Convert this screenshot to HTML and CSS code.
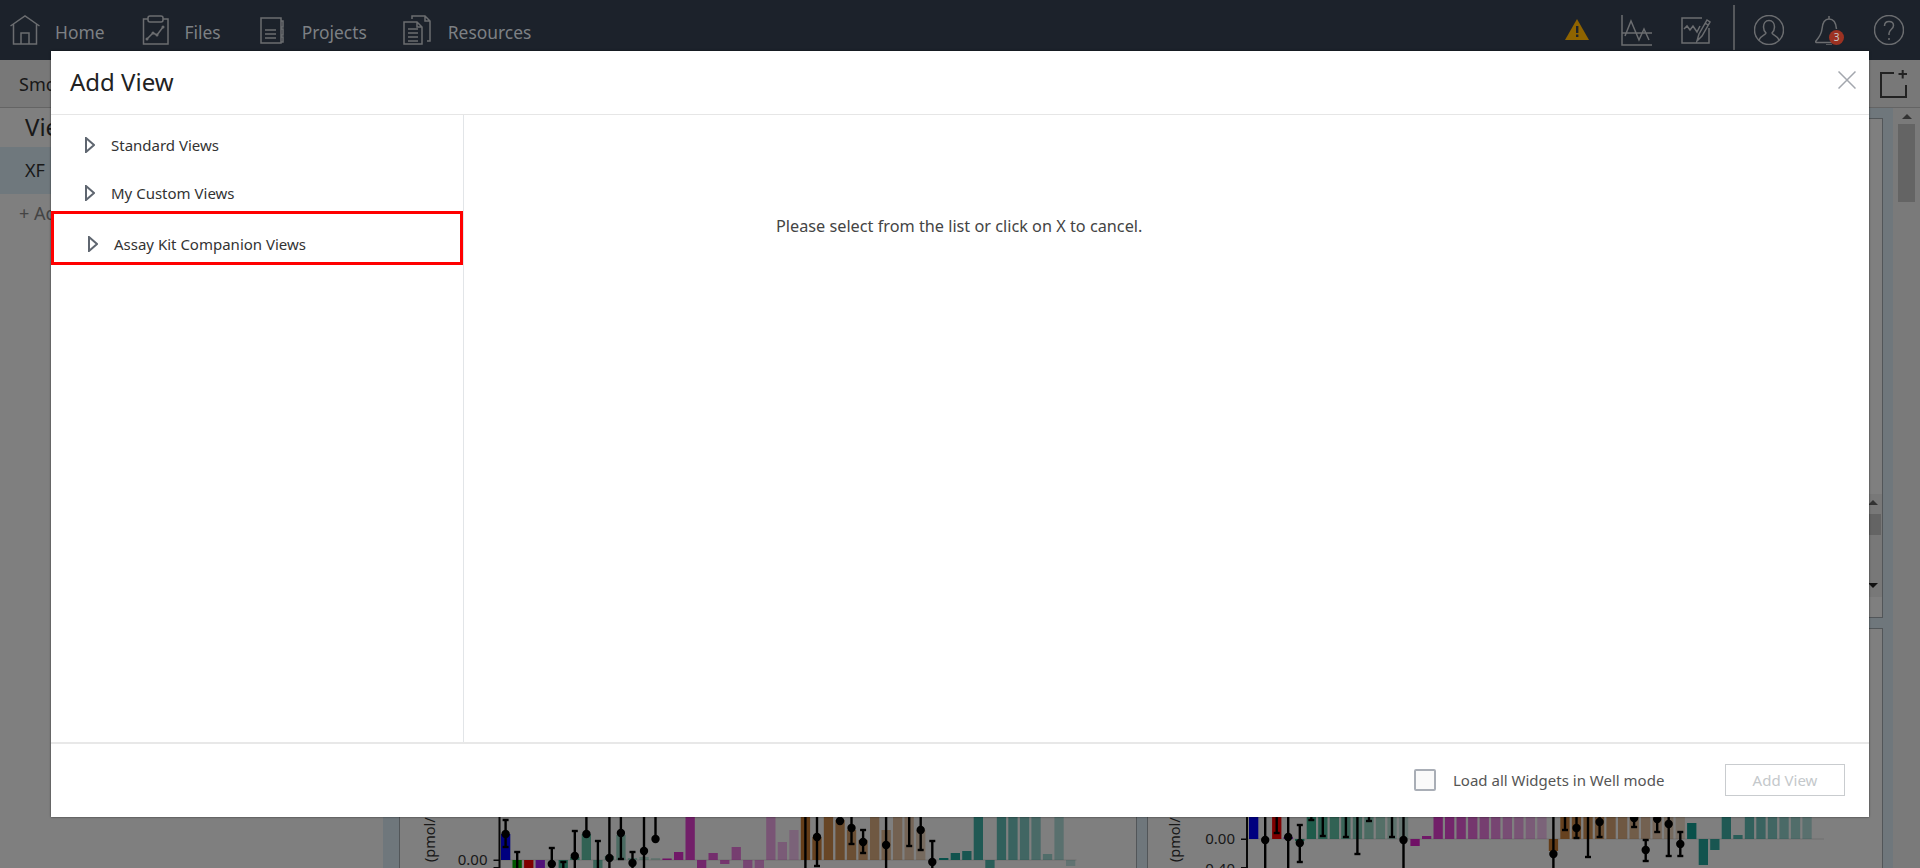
FILE: index.html
```html
<!DOCTYPE html>
<html>

<head>
    <meta name="viewport" content="width=device-width, initial-scale=1.0" />
    <title>Add View</title>
    <link rel="stylesheet" href="styles.css">
</head>

<body>
    <!-- Top nav -->
    <header class="topnav">
        <a class="nav-item nav-home">
            <svg class="nav-icon" width="30" height="30" viewBox="0 0 30 30">
                <path d="M.5 11 15 1l14.500 10M3.500 9v20h23V9M11 29V18h8v11" />
            </svg>
            <span>Home</span>
        </a>
        <a class="nav-item nav-files">
            <svg class="nav-icon" width="27" height="30" viewBox="0 0 27 30">
                <path d="M6 4H1.500v25H26V4h-5" />
                <rect x="6" y="1" width="15" height="6" rx="2" />
                <path d="m5 24 6-6 4 2 6-8" />
                <circle cx="5" cy="24" r="1.500" class="solid" />
                <circle cx="11" cy="18" r="1.500" class="solid" />
                <circle cx="15" cy="20" r="1.500" class="solid" />
                <circle cx="21" cy="12" r="1.500" class="solid" />
            </svg>
            <span>Files</span>
        </a>
        <a class="nav-item nav-projects">
            <svg class="nav-icon" width="24" height="27" viewBox="0 0 24 27">
                <path d="M21 1H1v25h20zM5 13h11M5 17h11M5 21h11M21 4h2v6h-2M21 12h2v6h-2M21 20h2v5h-2" />
            </svg>
            <span>Projects</span>
        </a>
        <a class="nav-item nav-resources">
            <svg class="nav-icon" width="28" height="30" viewBox="0 0 28 30">
                <path d="M1 7h13l5 5v17H1zM14 7v5h5M5 14h10M5 18h10M5 22h10M5 26h10M9 4V1h13l5 5v20h-3M22 1v5h5" />
            </svg>
            <span>Resources</span>
        </a>

        <div class="nav-tools">
            <svg class="warn-icon" width="24" height="21" viewBox="0 0 24 21">
                <path d="M12 0 24 21H0z" fill="#8f6400" />
                <path d="M11 7h2.400v7H11zM11 15.500h2.400V18H11z" fill="#1c222b" />
            </svg>
            <svg class="nav-icon tool-chart" width="31" height="31" viewBox="0 0 31 31">
                <path d="M1 0v30h30M1 18h30M4 21 10 6l8 19 5-11 5 11" />
            </svg>
            <svg class="nav-icon tool-edit" width="31" height="27" viewBox="0 0 31 27">
                <path d="M21 1H1v25h27V11M3 12l3-3 3 4 3-4 4 6 3-6M16 24l2-7L26 3l3 2-8 14zM24 6l3 2" />
            </svg>
            <div class="nav-divider"></div>
            <svg class="nav-icon tool-user" width="30" height="30" viewBox="0 0 30 30">
                <circle cx="15" cy="15" r="14.500" />
                <path d="M15 5.500c-3.500 0-5.500 3-5.500 6.500 0 3 1.500 5 2.500 6 0 2-5.500 2.500-7 7M15 5.500c3.500 0 5.500 3 5.500 6.500 0 3-1.500 5-2.500 6 0 2 5.500 2.500 7 7" />
            </svg>
            <div class="bell-holder">
                <svg class="nav-icon" width="30" height="30" viewBox="0 0 30 30">
                    <path d="M14 1v3M14 4C9 4 7.500 8 7 14 6.500 19 3.500 23 1 26c-.8 1 0 1.500 1 1.500h20M11 30h6M14 4c5 0 7 4 7.500 10" />
                </svg>
                <span class="bell-badge">3</span>
            </div>
            <svg class="nav-icon tool-help" width="30" height="30" viewBox="0 0 30 30">
                <circle cx="15" cy="15" r="14.500" />
                <path d="M10.500 11c0-3 2-4.500 4.500-4.500s4.500 1.500 4.500 4c0 3.500-4.500 4-4.500 8v1.500M15 23v2" />
            </svg>
        </div>
    </header>

    <!-- Page behind the dialog -->
    <div class="subbar">
        <span>Smc</span>
        <svg class="add-widget" width="27" height="28" viewBox="0 0 27 28">
            <path d="M14 3H1v24h25V15M18.500 4H27M22.700 0v8.500" />
        </svg>
    </div>

    <div class="workspace">
        <aside class="views-side">
            <div class="views-title">View</div>
            <div class="views-row">XF</div>
            <div class="views-add">+ Add</div>
        </aside>

        <div class="charts">
            <div class="panel panel-top">
                <div class="inner-scroll">
                    <div class="arrow-up"></div>
                    <div class="inner-thumb"></div>
                    <div class="arrow-down"></div>
                </div>
            </div>
            <div class="chart-row">
                <div class="panel"><svg id="chart1" class="chart" width="736" height="240" viewBox="400 629 736 240"></svg></div>
                <div class="panel"><svg id="chart2" class="chart" width="734" height="240" viewBox="1148 629 734 240"></svg></div>
            </div>
        </div>

        <div class="page-scroll">
            <div class="arrow-up"></div>
            <div class="page-thumb"></div>
        </div>
    </div>

    <div class="scrim"></div>

    <!-- Add View dialog -->
    <div class="modal">
        <div class="modal-head">
            <h1>Add View</h1>
            <svg class="modal-close" width="18" height="18" viewBox="0 0 18 18">
                <path d="M.5.5l17 17M17.500.5l-17 17" />
            </svg>
        </div>
        <div class="modal-body">
            <div class="tree">
                <div class="tree-row">
                    <svg class="tree-arrow" width="10" height="16" viewBox="0 0 10 16"><path d="M1 1v14l8-7z" /></svg>
                    <span>Standard Views</span>
                </div>
                <div class="tree-row">
                    <svg class="tree-arrow" width="10" height="16" viewBox="0 0 10 16"><path d="M1 1v14l8-7z" /></svg>
                    <span>My Custom Views</span>
                </div>
                <div class="tree-row picked">
                    <svg class="tree-arrow" width="10" height="16" viewBox="0 0 10 16"><path d="M1 1v14l8-7z" /></svg>
                    <span>Assay Kit Companion Views</span>
                </div>
            </div>
            <div class="modal-main">Please select from the list or click on X to cancel.</div>
        </div>
        <div class="modal-foot">
            <div class="check-box"></div>
            <span class="check-label">Load all Widgets in Well mode</span>
            <button class="add-btn" disabled>Add View</button>
        </div>
    </div>

    <script src="script.js"></script>
</body>

</html>
```

FILE: styles.css
```css
* {
    box-sizing: border-box;
}

html,
body {
    margin: 0;
    height: 868px;
    overflow: hidden;
}

body {
    position: relative;
    font-family: "Noto Sans", sans-serif;
    background: #fff;
    color: #333;
}

/* top nav */
.topnav {
    position: relative;
    z-index: 2;
    display: flex;
    align-items: flex-start;
    height: 60px;
    padding-left: 10px;
    background: #1c222b;
    color: #7d8084;
    font-size: 17.4px;
}

.nav-item {
    display: flex;
    align-items: center;
    gap: 15px;
    height: 60px;
    margin-right: 38px;
}

.nav-item span {
    margin-top: 3px;
}

.nav-files {
    margin-right: 39px;
}

.nav-projects {
    gap: 18px;
    margin-right: 36px;
}

.nav-resources {
    gap: 17px;
}

.nav-icon {
    display: block;
    fill: none;
    stroke: #6b6d70;
    stroke-width: 1.5;
}

.nav-icon .solid {
    fill: #6b6d70;
    stroke: none;
}

.nav-tools {
    display: flex;
    align-items: center;
    height: 60px;
    margin-left: auto;
    padding-right: 16px;
}

.warn-icon {
    margin-right: 32px;
    margin-top: -2px;
}

.tool-edit {
    margin-left: 29px;
}

.nav-divider {
    width: 2px;
    height: 45px;
    margin: -6px 19px 0 21px;
    background: #55585c;
}

.bell-holder {
    position: relative;
    margin: 0 29px 0 31px;
}

.bell-badge {
    position: absolute;
    right: 1px;
    bottom: 0;
    width: 15px;
    height: 15px;
    border-radius: 50%;
    background: #9c3222;
    color: #c9c9c9;
    font-size: 10px;
    line-height: 15px;
    text-align: center;
}

/* page behind the dialog */
.subbar {
    display: flex;
    align-items: center;
    justify-content: space-between;
    height: 48px;
    padding: 0 13px 0 19px;
    background: #f0f0f0;
    border-bottom: 1px solid #c8c8c8;
    font-size: 18px;
}

.add-widget {
    fill: none;
    stroke: #444;
    stroke-width: 2;
}

.workspace {
    display: flex;
    height: 760px;
}

.views-side {
    width: 383px;
}

.views-title {
    height: 39px;
    padding-left: 25px;
    font-size: 24px;
    line-height: 38px;
}

.views-row {
    height: 47px;
    padding-left: 25px;
    background: #dff0fa;
    font-size: 18px;
    line-height: 47px;
}

.views-add {
    padding: 7px 0 0 19px;
    color: #888;
    font-size: 18px;
}

.charts {
    flex: 1;
    display: flex;
    flex-direction: column;
    gap: 10px;
    padding: 10px 10px 0 16px;
    background: #dfeef8;
}

.panel {
    border: 1px solid #a4adb3;
    background: #fff;
}

.panel-top {
    display: flex;
    justify-content: flex-end;
    height: 500px;
    flex-shrink: 0;
}

.inner-scroll {
    display: flex;
    flex-direction: column;
    align-items: center;
    width: 19px;
    height: 103px;
    margin-top: 375px;
    background: #f0f0f0;
}

.inner-thumb {
    width: 16px;
    height: 21px;
    margin-top: 9px;
    background: #c8c8c8;
}

.arrow-up {
    width: 0;
    margin-top: 6px;
    border: 5px solid transparent;
    border-top: 0;
    border-bottom: 5px solid #666;
}

.arrow-down {
    width: 0;
    margin-top: auto;
    margin-bottom: 9px;
    border: 5px solid transparent;
    border-bottom: 0;
    border-top: 5px solid #222;
}

.chart-row {
    display: flex;
    gap: 10px;
}

.chart-row .panel:first-child {
    width: 738px;
}

.chart-row .panel:last-child {
    flex: 1;
}

.chart {
    display: block;
    font-size: 15px;
    fill: #333;
}

.page-scroll {
    display: flex;
    flex-direction: column;
    align-items: center;
    width: 27px;
    background: #f4f4f4;
}

.page-thumb {
    width: 17px;
    height: 78px;
    margin-top: 5px;
    background: #c8c8c8;
}

.scrim {
    position: absolute;
    top: 60px;
    left: 0;
    right: 0;
    bottom: 0;
    background: rgba(0, 0, 0, 0.5);
}

/* dialog */
.modal {
    position: absolute;
    z-index: 3;
    top: 51px;
    left: 51px;
    display: flex;
    flex-direction: column;
    width: 1818px;
    height: 766px;
    background: #fff;
    box-shadow: 0 0 2px rgba(0, 0, 0, 0.6);
    color: #333;
}

.modal-head {
    display: flex;
    align-items: center;
    justify-content: space-between;
    height: 64px;
    padding: 0 13px 2px 19px;
    border-bottom: 1px solid #e6e6e6;
}

.modal-head h1 {
    margin: 0;
    color: #222;
    font-size: 24px;
    font-weight: 400;
}

.modal-close {
    margin-bottom: 3px;
    fill: none;
    stroke: #a3a7ae;
    stroke-width: 1.5;
}

.modal-body {
    flex: 1;
    display: flex;
}

.tree {
    width: 413px;
    padding-top: 14px;
    border-right: 1px solid #e2e5e8;
}

.tree-row {
    display: flex;
    align-items: center;
    gap: 16px;
    height: 32px;
    margin-bottom: 16px;
    padding-left: 34px;
    font-size: 15px;
}

.tree-row.picked {
    height: 54px;
    margin-top: -14px;
    padding: 12px 0 0 34px;
    border: 3px solid #f00;
}

.tree-arrow {
    fill: none;
    stroke: #5f6670;
    stroke-width: 2;
}

.modal-main {
    flex: 1;
    padding: 101px 0 0 312px;
    color: #444;
    font-size: 16.25px;
    line-height: 20px;
}

.modal-foot {
    display: flex;
    align-items: center;
    justify-content: flex-end;
    height: 75px;
    padding: 0 24px 2px 0;
    border-top: 2px solid #e8e8e8;
}

.check-box {
    width: 22px;
    height: 22px;
    border: 2px solid #a9aeb6;
    border-radius: 2px;
    background: #fafafa;
}

.check-label {
    width: 211px;
    margin: 0 61px 0 17px;
    color: #555;
    font-size: 15px;
    white-space: nowrap;
}

.add-btn {
    width: 120px;
    height: 32px;
    border: 1px solid #c9cccf;
    background: #fff;
    color: #c4c8cb;
    font-family: inherit;
    font-size: 15px;
}
```

FILE: script.js
```js
// bars and error bars for the two charts behind the dialog
// coordinates are page pixels, the svg viewBox takes care of the offset
var TALL = 60;
var BELOW = -12;
var PITCH = 11.53;
var BAR_W = 9.3;

var fixedColors = { 0: "#0000ff", 1: "#00b000", 2: "#ff0000", 3: "#a020f0" };

var groups = [
    { from: 4, to: 13, color: "#2fb08c" },
    { from: 14, to: 25, color: "#e020cc" },
    { from: 26, to: 37, color: "#c87a30" },
    { from: 38, to: 49, color: "#12a094" }
];

var bars1 = [26, BELOW, BELOW, BELOW, 0, BELOW, 3, 26, BELOW, 4, 25, 2, 3, 2,
    1.5, 8, TALL, BELOW, 7, -4, 13, BELOW, BELOW, TALL, 18, 30,
    TALL, 23, TALL, 40, 30, 20, TALL, 30, TALL, TALL, 30, 0,
    2, 7, 9, TALL, BELOW, TALL, TALL, TALL, TALL, 6, TALL, -6];

var bars2 = [40, 0, 40, 2, -2, TALL, TALL, TALL, TALL, TALL, TALL, TALL, TALL, TALL,
    -7, 3, TALL, TALL, TALL, TALL, TALL, TALL, TALL, TALL, TALL, TALL,
    -12, TALL, TALL, TALL, TALL, TALL, TALL, TALL, TALL, TALL, TALL, TALL,
    16, -26, -11, TALL, 4, TALL, TALL, TALL, TALL, TALL, TALL, 0];

// [index, top, dot, bottom], a top of 800 or bottom of 880 runs off the crop so has no cap
var errs1 = [[0, 820, 834, 847], [1, 852, null, 880], [4, 848, 864, 880], [5, 862, null, 880],
    [6, 831, 856, 880], [7, 800, 834, 834], [8, 841, null, 880], [9, 800, 858, 880],
    [10, 800, 833, 859], [11, 852, 863, 880], [12, 800, 851, 880], [13, 800, 839, 839],
    [26, 800, null, 880], [27, 800, 837, 866], [29, 800, 821, 821], [30, 800, 828, 844],
    [31, 830, 842, 853], [33, 800, 845, 880], [35, 800, null, 846], [36, 800, 830, 850],
    [37, 841, 862, 880]];

var errs2 = [[1, 800, 840, 880], [2, 800, null, 833], [3, 800, 837, 880], [4, 825, 843, 862],
    [5, 800, null, 820], [6, 800, null, 836], [8, 800, null, 837], [9, 800, null, 854],
    [10, 800, null, 821], [12, 800, null, 837], [13, 800, 840, 880],
    [26, 800, 854, 880], [27, 800, null, 830], [28, 800, 828, 838], [29, 800, null, 857],
    [30, 800, 822, 837], [33, 800, 818, 827], [34, 840, 850, 861], [35, 800, 819, 832],
    [36, 800, 824, 856], [37, 832, 844, 856]];

function barFill(i) {
    if (fixedColors[i]) {
        return { color: fixedColors[i], alpha: 1 };
    }
    for (var g = 0; g < groups.length; g++) {
        if (i >= groups[g].from && i <= groups[g].to) {
            var step = (i - groups[g].from) / (groups[g].to - groups[g].from);
            return { color: groups[g].color, alpha: 1 - 0.75 * step };
        }
    }
}

function drawChart(id, c) {
    var out = "";

    // baseline, axis and ticks
    out += '<rect x="' + c.axisX + '" y="' + (c.base - 0.5) + '" width="' + c.baseW + '" height="1" fill="#ddd"/>';
    out += '<rect x="' + (c.axisX - 1) + '" y="800" width="2" height="80" fill="#111"/>';
    out += '<rect x="' + (c.axisX - 6) + '" y="' + (c.base - 0.5) + '" width="6" height="1.5" fill="#111"/>';
    out += '<rect x="' + (c.axisX - 6) + '" y="867" width="6" height="1.5" fill="#111"/>';
    out += '<text x="' + (c.axisX - 12) + '" y="' + (c.base + 5) + '" text-anchor="end">0.00</text>';
    if (c.second) {
        out += '<text x="' + (c.axisX - 12) + '" y="874" text-anchor="end">-0.40</text>';
    }
    out += '<text transform="translate(' + c.labelX + ',862) rotate(-90)" font-size="14.500">(pmol/</text>';

    c.bars.forEach(function (h, i) {
        if (!h) {
            return;
        }
        var fill = barFill(i);
        var x = c.barX + PITCH * i;
        var y = h > 0 ? c.base - h : c.base;
        out += '<rect x="' + x.toFixed(1) + '" y="' + y + '" width="' + BAR_W + '" height="' + Math.abs(h) +
            '" fill="' + fill.color + '" fill-opacity="' + fill.alpha.toFixed(2) + '"/>';
    });

    c.errs.forEach(function (e) {
        var x = (c.barX + BAR_W / 2 + PITCH * e[0]).toFixed(1);
        out += '<path d="M' + x + ' ' + e[1] + 'V' + e[3] + '" stroke="#000" stroke-width="2.400"/>';
        if (e[1] != 800) {
            out += '<path d="M' + (x - 3) + ' ' + e[1] + 'h6" stroke="#000" stroke-width="2.400"/>';
        }
        if (e[3] != 880 && e[3] != e[2]) {
            out += '<path d="M' + (x - 3) + ' ' + e[3] + 'h6" stroke="#000" stroke-width="2.400"/>';
        }
        if (e[2]) {
            out += '<circle cx="' + x + '" cy="' + e[2] + '" r="4.200" fill="#000"/>';
        }
    });

    document.getElementById(id).innerHTML = out;
}

drawChart("chart1", { axisX: 499.500, base: 860, baseW: 577, barX: 501, labelX: 435, bars: bars1, errs: errs1 });
drawChart("chart2", { axisX: 1247, base: 839, baseW: 577, barX: 1249, labelX: 1180, bars: bars2, errs: errs2, second: true });
```
